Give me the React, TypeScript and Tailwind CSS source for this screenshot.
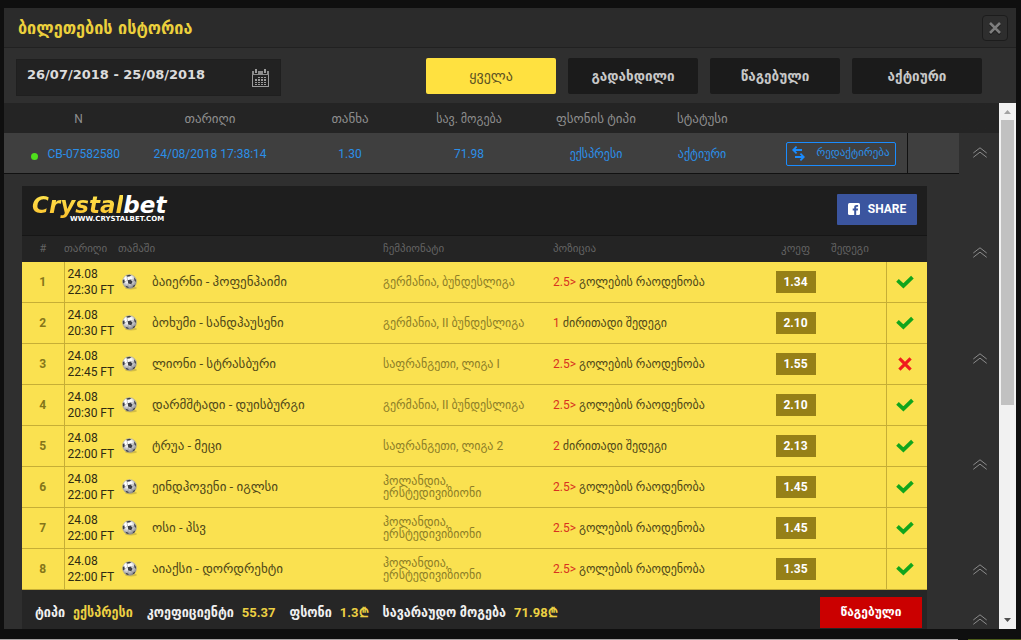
import React from "react";

type Match = {
  time: string;
  game: string;
  league: string;
  pick: string;
  market: string;
  odds: string;
  won: boolean;
};

const GOALS = "გოლების რაოდენობა";
const RESULT = "ძირითადი შედეგი";

const matches: Match[] = [
  { time: "22:30 FT", game: "ბაიერნი - ჰოფენჰაიმი", league: "გერმანია, ბუნდესლიგა", pick: "2.5>", market: GOALS, odds: "1.34", won: true },
  { time: "20:30 FT", game: "ბოხუმი - სანდჰაუსენი", league: "გერმანია, II ბუნდესლიგა", pick: "1", market: RESULT, odds: "2.10", won: true },
  { time: "22:45 FT", game: "ლიონი - სტრასბური", league: "საფრანგეთი, ლიგა I", pick: "2.5>", market: GOALS, odds: "1.55", won: false },
  { time: "20:30 FT", game: "დარმშტადი - დუისბურგი", league: "გერმანია, II ბუნდესლიგა", pick: "2.5>", market: GOALS, odds: "2.10", won: true },
  { time: "22:00 FT", game: "ტრუა - მეცი", league: "საფრანგეთი, ლიგა 2", pick: "2", market: RESULT, odds: "2.13", won: true },
  { time: "22:00 FT", game: "ეინდჰოვენი - იგლსი", league: "ჰოლანდია, ერსტედივიზიონი", pick: "2.5>", market: GOALS, odds: "1.45", won: true },
  { time: "22:00 FT", game: "ოსი - პსვ", league: "ჰოლანდია, ერსტედივიზიონი", pick: "2.5>", market: GOALS, odds: "1.45", won: true },
  { time: "22:00 FT", game: "აიაქსი - დორდრეხტი", league: "ჰოლანდია, ერსტედივიზიონი", pick: "2.5>", market: GOALS, odds: "1.35", won: true },
];

const filters = ["ყველა", "გადახდილი", "წაგებული", "აქტიური"];

const totals = [
  { label: "ტიპი", value: "ექსპრესი", numeric: false },
  { label: "კოეფიციენტი", value: "55.37", numeric: true },
  { label: "ფსონი", value: "1.3₾", numeric: true },
  { label: "სავარაუდო მოგება", value: "71.98₾", numeric: true },
];

function CalendarIcon() {
  return (
    <svg width="17" height="18" viewBox="0 0 17 18" aria-hidden="true">
      <path d="M0 2h17v16H0z M1 6v11h15V6z" fill="#9b9b9b" fillRule="evenodd" />
      <path d="M0 2h17v4H0z" fill="#8c8c8c" />
      <path d="M2 1h4v4H2zM11 1h4v4h-4z" fill="#222" />
      <path d="M3 0h2v4H3zM12 0h2v4h-2z" fill="#9b9b9b" />
      <path
        d="M6 8h2v1H6zM9 8h2v1H9zM12 8h2v1h-2zM3 10h2v2H3zM6 10h2v2H6zM9 10h2v2H9zM12 10h2v2h-2zM3 13h2v1H3zM6 13h2v1H6zM9 13h2v1H9zM12 13h2v1h-2zM3 15h2v1H3zM6 15h2v1H6zM9 15h2v1H9zM12 15h2v1h-2z"
        fill="#9b9b9b"
      />
    </svg>
  );
}

function CloseIcon() {
  return (
    <svg width="14" height="14" viewBox="0 0 14 14" aria-hidden="true">
      <path d="M2 3l10 10M12 3L2 13" stroke="#151515" strokeWidth="2.6" />
      <path d="M2 2l10 10M12 2L2 12" stroke="#7d7d7d" strokeWidth="2.6" />
    </svg>
  );
}

function ChevronsIcon() {
  return (
    <svg width="14" height="12" viewBox="0 0 14 12" fill="none" stroke="#8c8c8c" aria-hidden="true">
      <path d="M0.3 6L7 0.8L13.7 6M0.3 10.3L7 5.1L13.7 10.3" />
    </svg>
  );
}

function SwapIcon() {
  return (
    <svg width="13" height="15" viewBox="0 0 13 15" fill="none" stroke="#1a8cff" strokeWidth="1.8" aria-hidden="true">
      <path d="M4.6 0.6L1.2 4L4.6 7.4M1.2 4H10M8.4 7.6L11.8 11L8.4 14.4M11.8 11H3" />
    </svg>
  );
}

function BallIcon() {
  return (
    <svg width="16" height="16" viewBox="0 0 16 16" className="shrink-0" aria-hidden="true">
      <defs>
        <radialGradient id="ball" cx="0.4" cy="0.3" r="0.75">
          <stop offset="0.3" stopColor="#ffffff" />
          <stop offset="1" stopColor="#77777e" />
        </radialGradient>
      </defs>
      <ellipse cx="9" cy="14" rx="6" ry="1.5" fill="#b9a53c" opacity="0.6" />
      <circle cx="7.5" cy="7.5" r="7" fill="url(#ball)" stroke="#a7a58c" strokeWidth="0.5" />
      <path
        d="M5.6 6.2L8.6 5.4L10.6 7.8L9.2 10.3L6.2 9.6zM4.2 1.6L7.4 0.8L9.6 1.8L7.2 2.6L5 2.7zM12 3.2L14 6L13.6 8L12.4 6.4zM0.8 6L2.3 5.2L2.8 8L1.8 9.6L0.8 8.6zM3.4 11.8L6 12.4L6.8 14.1L4.6 13.6zM11.4 11.4L13.4 10.4L12.4 12.6L10.4 13.6z"
        fill="#3c3e46"
      />
      <path d="M5.6 6.2L5 2.7M8.6 5.4L12.4 6.4M10.6 7.8L12.4 6.4M9.2 10.3L11.4 11.4M6.2 9.6L6 12.4M5.6 6.2L2.8 8" stroke="#888" strokeWidth="0.5" />
    </svg>
  );
}

function ResultIcon({ won }: { won: boolean }) {
  return won ? (
    <svg width="18" height="14" viewBox="0 0 18 14" fill="none" stroke="#11a51c" strokeWidth="3.8" className="mx-auto" role="img" aria-label="✓">
      <path d="M1.5 5.4L7.4 10.8L16.4 2.2" strokeLinejoin="miter" />
    </svg>
  ) : (
    <svg width="16" height="14" viewBox="0 0 16 14" fill="none" stroke="#f01d1d" strokeWidth="3.2" className="mx-auto" role="img" aria-label="✕">
      <path d="M2.4 1.4L13.6 12.6M13.6 1.4L2.4 12.6" />
    </svg>
  );
}

function FacebookIcon() {
  return (
    <svg width="12" height="12" viewBox="0 0 12 12" aria-hidden="true">
      <rect width="12" height="12" rx="1.5" fill="#fff" />
      <path d="M6.2 12V7.4H4.7V5.6h1.5V4.4C6.2 2.8 7.1 2 8.6 2h1.5v1.7H9.1c-.7 0-.9.3-.9.9v1h1.9l-.3 1.8H8.2V12z" fill="#3b559f" />
    </svg>
  );
}

function Rail() {
  const tops = ["mt-11", "mt-[88px]", "mt-[94px]", "mt-[94px]", "mt-[93px]", "mt-[38px]"];
  return (
    <div className="flex w-10 shrink-0 flex-col bg-linear-to-b from-[#242424] from-[30px] to-[#2f2f2f] to-[30px]">
      {tops.map((top, i) => (
        <button key={i} type="button" aria-label="დახურვა" className={`${top} flex h-3 shrink-0 justify-center pl-0.5`}>
          <ChevronsIcon />
        </button>
      ))}
    </div>
  );
}

function Scrollbar() {
  return (
    <div className="flex w-[17px] shrink-0 flex-col items-center bg-[#f1f1f1]" aria-hidden="true">
      <svg width="17" height="17" viewBox="0 0 17 17" className="shrink-0">
        <path d="M5 11h7L8.5 7z" fill="#a3a3a3" />
      </svg>
      <div className="w-full flex-1 px-0.5">
        <div className="h-[58%] bg-[#c1c1c1]" />
      </div>
      <svg width="17" height="17" viewBox="0 0 17 17" className="shrink-0">
        <path d="M5 6h7L8.5 10z" fill="#505050" />
      </svg>
    </div>
  );
}

function SummaryTable() {
  return (
    <table className="w-full table-fixed border-collapse text-center text-xs">
      <colgroup>
        <col className="w-[139px]" />
        <col className="w-[134px]" />
        <col className="w-[146px]" />
        <col className="w-[92px]" />
        <col className="w-[162px]" />
        <col className="w-[50px]" />
        <col className="w-[180px]" />
        <col className="w-[52px]" />
      </colgroup>
      <thead>
        <tr className="h-[30px] bg-[#242424] text-[13px] text-[#8e8e8e]">
          <th className="pt-0.5 pl-2.5 text-xs font-normal">N</th>
          <th className="pt-0.5 font-normal">თარიღი</th>
          <th className="pt-0.5 font-normal">თანხა</th>
          <th className="pt-0.5 text-xs font-normal whitespace-nowrap">სავ. მოგება</th>
          <th className="pt-0.5 font-normal">ფსონის ტიპი</th>
          <th className="pt-0.5 font-normal">სტატუსი</th>
          <th />
          <th />
        </tr>
      </thead>
      <tbody>
        <tr className="h-10 border-b border-[#111] bg-[#3f3f3f] text-[#2b8fe8]">
          <td className="pt-0.5">
            <div className="flex items-center justify-end gap-[9px] pr-[23px]">
              <span className="mt-1.5 size-[7px] rounded-full bg-[#4fe01c]" />
              <a href="#ticket">CB-07582580</a>
            </div>
          </td>
          <td className="pt-0.5">24/08/2018 17:38:14</td>
          <td className="pt-0.5">1.30</td>
          <td className="pt-0.5">71.98</td>
          <td className="pt-0.5">ექსპრესი</td>
          <td className="pt-0.5">აქტიური</td>
          <td className="border-r border-[#111] pt-0.5 pr-[11px]">
            <button type="button" className="ml-auto flex h-6 w-[110px] items-center justify-between rounded-xs border border-[#1a8cff] px-[5px] text-[11px]">
              <SwapIcon />
              <span>რედაქტირება</span>
            </button>
          </td>
          <td className="border-r border-[#111]" />
        </tr>
      </tbody>
    </table>
  );
}

function Logo() {
  return (
    <div className="font-['DejaVu_Sans'] font-bold">
      <div className="text-[23px] leading-[22px] italic">
        <span className="bg-linear-to-b from-[#ffe84f] to-[#fbc02d] bg-clip-text text-transparent">Crystal</span>
        <span className="text-white">bet</span>
      </div>
      <div className="-mt-px pl-[38px] text-[7px] leading-2 text-white">WWW.CRYSTALBET.COM</div>
    </div>
  );
}

function Ticket() {
  return (
    <section className="mt-3 mr-8 ml-[18px] bg-[#1e1e1e]">
      <header className="flex h-[50px] items-start justify-between border-b border-[#161616] px-2.5 pt-2">
        <Logo />
        <button type="button" className="flex h-[31px] w-20 items-center justify-center gap-2 rounded-[1px] bg-[#3b559f] text-xs font-bold text-white">
          <FacebookIcon />
          SHARE
        </button>
      </header>
      <table className="w-full table-fixed border-collapse text-left text-xs">
        <colgroup>
          <col className="w-[42px]" />
          <col className="w-[54px]" />
          <col className="w-[265px]" />
          <col className="w-[170px]" />
          <col className="w-[217px]" />
          <col className="w-[51px]" />
          <col className="w-[65px]" />
          <col className="w-[41px]" />
        </colgroup>
        <thead>
          <tr className="h-[26px] bg-[#242424] text-[11px] text-[#636363]">
            <th className="pt-0.5 text-center font-normal">#</th>
            <th className="pt-0.5 font-normal">თარიღი</th>
            <th className="pt-0.5 font-normal">თამაში</th>
            <th className="pt-0.5 font-normal">ჩემპიონატი</th>
            <th className="pt-0.5 font-normal">პოზიცია</th>
            <th className="pt-0.5 text-center font-normal">კოეფ</th>
            <th className="pt-0.5 pl-2.5 font-normal">შედეგი</th>
            <th />
          </tr>
        </thead>
        <tbody>
          {matches.map((m, i) => (
            <tr key={i} className="h-[41px] border-b border-[#c6ae36] bg-[#fae150] text-[#4f4818]">
              <td className="border-r border-[#c6ae36] text-center font-bold text-[#85761a]">{i + 1}</td>
              <td className="pl-[3px] leading-4 whitespace-nowrap text-[#2e2b12]">
                24.08
                <br />
                {m.time}
              </td>
              <td>
                <div className="flex items-center gap-3.5 pl-1">
                  <BallIcon />
                  <span className="text-[13px]">{m.game}</span>
                </div>
              </td>
              <td className="pr-3 leading-3 text-[#8d7e27]">{m.league}</td>
              <td className="whitespace-nowrap">
                <span className="text-[#d8321f]">{m.pick}</span> {m.market}
              </td>
              <td>
                <div className="mx-auto h-[22px] w-10 bg-[#968017] text-center leading-[22px] font-bold text-white">{m.odds}</div>
              </td>
              <td className="border-r border-[#c6ae36]" />
              <td className="pr-1">
                <ResultIcon won={m.won} />
              </td>
            </tr>
          ))}
        </tbody>
      </table>
      <footer className="flex h-[39px] items-start justify-between bg-[#262626] pt-[7px] pr-[5px] pl-[13px]">
        <dl className="flex items-center gap-3.5 font-[Roboto,'DejaVu_Sans_Condensed',sans-serif] text-sm leading-[31px] font-bold whitespace-nowrap text-[#f0f0f0]">
          {totals.map(({ label, value, numeric }) => (
            <div key={label} className="flex items-baseline gap-2">
              <dt className="leading-[31px]">{label}</dt>
              <dd className={numeric ? "text-[13px] leading-[31px] text-[#ecd043]" : "leading-[31px] text-[#ecd043]"}>{value}</dd>
            </div>
          ))}
        </dl>
        <div className="h-[31px] w-[102px] bg-[#cb0000] text-center text-xs leading-[31px] font-bold text-white">წაგებული</div>
      </footer>
    </section>
  );
}

export default function App() {
  return (
    <div className="flex h-screen flex-col bg-[#0f0f0f] font-[Roboto,'DejaVu_Sans',sans-serif]">
      <main className="mx-1 mt-2 mr-[5px] mb-2.5 flex min-h-0 flex-1 flex-col bg-[#2f2f2f]">
        <header className="flex h-10 shrink-0 items-center justify-between border-b border-[#212121] bg-[#2b2b2b] pr-2 pl-3.5">
          <h1 className="font-['DejaVu_Sans_Condensed','DejaVu_Sans',sans-serif] text-lg font-bold text-[#ecd03c]">ბილეთების ისტორია</h1>
          <button type="button" aria-label="დახურვა" className="flex size-[26px] items-center justify-center rounded-sm border border-[#1c1c1c] bg-[#2e2e2e]">
            <CloseIcon />
          </button>
        </header>
        <div className="flex h-[55px] shrink-0 items-start justify-between pt-2.5 pr-[34px] pl-3">
          <label className="mt-px flex h-[37px] w-[265px] items-center border border-[#1f1f1f] bg-[#222] pr-[11px] pl-2.5">
            <input
              aria-label="თარიღი"
              defaultValue="26/07/2018 - 25/08/2018"
              className="mb-1.5 min-w-0 flex-1 bg-transparent font-['DejaVu_Sans'] text-[13px] font-bold text-[#dcdcdc] outline-none"
            />
            <CalendarIcon />
          </label>
          <div className="flex gap-3">
            {filters.map((f, i) => (
              <button
                key={f}
                type="button"
                className={
                  i === 0
                    ? "h-9 w-[130px] rounded-xs bg-[#ffe140] text-sm text-[#5d5322]"
                    : "h-9 w-[130px] rounded-xs bg-[#1b1b1b] font-['DejaVu_Sans_Condensed','DejaVu_Sans',sans-serif] text-[15px] font-bold text-[#c8c8c8]"
                }
              >
                {f}
              </button>
            ))}
          </div>
        </div>
        <div className="flex min-h-0 flex-1 overflow-hidden">
          <div className="min-w-0 flex-1">
            <SummaryTable />
            <Ticket />
          </div>
          <Rail />
          <Scrollbar />
        </div>
      </main>
      <div className="flex h-px shrink-0 gap-2.5">
        <div className="flex-1 bg-[#a8a4a4]" />
        <div className="w-[53px] bg-[#4d5c1a]" />
      </div>
    </div>
  );
}
